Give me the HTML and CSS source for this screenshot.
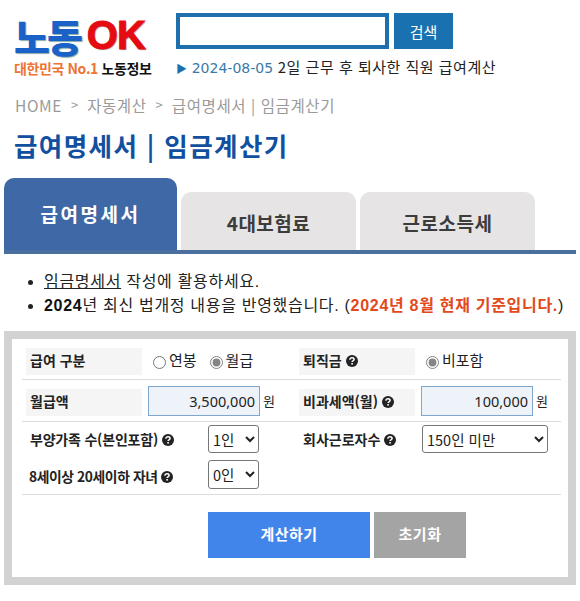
FILE: index.html
```html
<!DOCTYPE html>
<html lang="ko">
<head>
<meta charset="utf-8">
<title>급여명세서 | 임금계산기</title>
<link rel="stylesheet" href="styles.css">
</head>
<body>
<svg class="defs" width="0" height="0" aria-hidden="true">
  <symbol id="q" viewBox="0 0 12 12">
    <circle cx="6" cy="6" r="6" fill="#222"/>
    <path d="M3.9 4.7C3.9 3.5 4.8 2.8 6 2.8C7.2 2.8 8.1 3.5 8.1 4.5C8.1 5.9 6.1 5.9 6.1 7.1" fill="none" stroke="#fff" stroke-width="1.5"/>
    <rect x="5.3" y="8" width="1.6" height="1.6" fill="#fff"/>
  </symbol>
</svg>
<div class="page">
  <header class="top">
    <div class="logo">
      <div class="logo-main"><span class="logo-ko">노동</span><span class="logo-ok">OK</span></div>
      <div class="logo-sub"><span class="logo-orange">대한민국 No.1</span> 노동정보</div>
    </div>
    <div class="search-area">
      <form class="search">
        <input class="search-input" type="text" aria-label="검색어">
        <button class="search-btn" type="button">검색</button>
      </form>
      <p class="ticker"><span class="tri">▶</span> <span class="date">2024-08-05</span> 2일 근무 후 퇴사한 직원 급여계산</p>
    </div>
  </header>

  <nav class="crumbs"><span>HOME</span><i>&gt;</i><span>자동계산</span><i>&gt;</i><span>급여명세서 | 임금계산기</span></nav>
  <h1 class="title">급여명세서 | 임금계산기</h1>

  <div class="tabs">
    <a class="tab tab-on">급여명세서</a>
    <a class="tab">4대보험료</a>
    <a class="tab">근로소득세</a>
  </div>

  <ul class="notes">
    <li><u>임금명세서</u> 작성에 활용하세요.</li>
    <li><b>2024</b>년 최신 법개정 내용을 반영했습니다. (<b class="red">2024년 8월 현재 기준입니다.</b>)</li>
  </ul>

  <section class="panel">
    <div class="sheet">
      <div class="row row-a">
        <div class="cell">
          <div class="label">급여 구분</div>
          <label class="radio"><input type="radio" name="pay">연봉</label>
          <label class="radio"><input type="radio" name="pay" checked>월급</label>
        </div>
        <div class="cell">
          <div class="label">퇴직금 <svg class="q"><use href="#q"/></svg></div>
          <label class="radio"><input type="radio" name="ret" checked>비포함</label>
        </div>
      </div>
      <div class="row row-b">
        <div class="cell">
          <div class="label">월급액</div>
          <input class="money" type="text" value="3,500,000" aria-label="월급액"><span class="won">원</span>
        </div>
        <div class="cell">
          <div class="label">비과세액(월) <svg class="q"><use href="#q"/></svg></div>
          <input class="money" type="text" value="100,000" aria-label="비과세액"><span class="won">원</span>
        </div>
      </div>
      <div class="row row-c">
        <div class="cell">
          <div class="plain">부양가족 수(본인포함) <svg class="q"><use href="#q"/></svg></div>
          <select class="sel sel-s" aria-label="부양가족 수"><option>1인</option></select>
        </div>
        <div class="cell">
          <div class="plain plain-r">회사근로자수 <svg class="q"><use href="#q"/></svg></div>
          <select class="sel sel-l" aria-label="회사근로자수"><option>150인 미만</option></select>
        </div>
        <div class="cell cell-2">
          <div class="plain plain-sm">8세이상 20세이하 자녀 <svg class="q"><use href="#q"/></svg></div>
          <select class="sel sel-s sel-low" aria-label="자녀 수"><option>0인</option></select>
        </div>
      </div>
      <div class="actions">
        <button class="btn btn-calc" type="button">계산하기</button>
        <button class="btn btn-reset" type="button">초기화</button>
      </div>
    </div>
  </section>
</div>
</body>
</html>
```
FILE: styles.css
```css
* { box-sizing: border-box; }
html, body { margin: 0; padding: 0; background: #fff; }
body { font-family: "Liberation Sans", "Noto Sans CJK KR", sans-serif; color: #222; overflow: hidden; }
.defs { display: block; height: 0; }
.page { width: 576px; padding-left: 4px; }

.top { display: flex; height: 92px; padding-top: 13px; }
.logo { width: 172px; padding: 0 0 0 10px; }
.logo-main { display: flex; align-items: center; height: 45px; }
.logo-ko { font: 900 39px/45px "Noto Sans CJK KR", sans-serif; color: #1a62c8; letter-spacing: -3px; text-shadow: 1px 1px 1px #8aa; }
.logo-ok { font: 900 40px/45px "Liberation Sans", sans-serif; color: #e60b12; margin-left: 7px; letter-spacing: -1px; -webkit-text-stroke: 1px #e60b12; text-shadow: 1px 1px 1px #999; }
.logo-sub { font: 700 14px/20px "Noto Sans CJK KR", sans-serif; color: #111; letter-spacing: -.4px; white-space: nowrap; }
.logo-orange { color: #ee7433; }
.search-area { flex: 1; }
.search { display: flex; gap: 5px; height: 36px; }
.search-input { width: 213px; height: 36px; border: 4px solid #1e70ad; background: #fff; border-radius: 0; padding: 0; }
.search-btn { width: 59px; height: 36px; border: 0; background: #1a71b0; color: #fff; font: 400 15px "Noto Sans CJK KR", sans-serif; padding: 0; }
.ticker { margin: 8px 0 0; font: 400 15px/20px "Noto Sans CJK KR", sans-serif; color: #222; white-space: nowrap; letter-spacing: .5px; }
.tri { color: #1e70ad; font-size: 11px; letter-spacing: 0; }
.date { font-family: "DejaVu Sans", sans-serif; font-size: 14px; letter-spacing: 0; color: #3a7aa8; }

.crumbs { display: flex; align-items: center; height: 26px; padding-left: 11px; font: 400 15.5px/26px "Noto Sans CJK KR", sans-serif; color: #9a9a9a; letter-spacing: .6px; }
.crumbs i { font-style: normal; margin: 0 9px; font-size: 13px; letter-spacing: 0; }
.title { margin: 9px 0 0; padding-left: 10px; height: 36px; font: 700 25.5px/36px "Noto Sans CJK KR", sans-serif; color: #12509f; white-space: nowrap; letter-spacing: 1.4px; }

.tabs { display: flex; align-items: flex-end; gap: 4px; height: 76px; margin-top: 15px; border-bottom: 4px solid #4a6f9f; }
.tab { display: flex; align-items: center; justify-content: center; width: 175px; height: 58px; padding-top: 2px; background: #e6e4e5; border-radius: 10px 10px 0 0; color: #3c3c3c; font: 700 19px "Noto Sans CJK KR", sans-serif; letter-spacing: .5px; }
.tab-on { width: 173px; height: 72px; padding: 0 0 2px; background: #3f69a6; color: #fff; letter-spacing: 2.5px; }

.notes { margin: 16px 0 0; padding: 0 0 0 40px; height: 61px; font: 400 16px/24px "Liberation Sans", "Noto Sans CJK KR", sans-serif; color: #222; white-space: nowrap; letter-spacing: .7px; }
.notes b { color: #111; }
.notes .red { color: #e2491c; }

.panel { border: 8px solid #d2d2d2; height: 254px; }
.sheet { padding: 9px 7px 0 10px; height: 238px; }
.row { display: grid; grid-template-columns: 273px 266px; border-bottom: 1px solid #dcdcdc; }
.cell { display: flex; align-items: flex-start; padding-left: 4px; font: 400 15px/20px "Noto Sans CJK KR", sans-serif; color: #222; }
.row-a { height: 32px; }
.row-a .cell { height: 27px; }
.row-b { height: 42px; }
.row-b .cell { padding-top: 6px; height: 41px; }
.row-b .label { margin-top: 3px; }
.row-c { height: 73px; grid-template-rows: 38px 34px; }
.row-c .cell { padding-top: 3px; }
.row-c .cell-2 { grid-column: 1; padding-top: 0; }
.label { width: 116px; height: 27px; padding-left: 4px; background: #f5f5f5; font: 700 14px/25px "Noto Sans CJK KR", sans-serif; color: #222; flex: none; white-space: nowrap; }
.q { width: 12px; height: 12px; vertical-align: -1px; }
.radio { display: flex; align-items: center; margin-left: 11px; height: 24px; }
.radio input { margin: 4px 3px 0 0; width: 13px; height: 13px; accent-color: #858585; }
.radio + .radio { margin-left: 13px; }
.money { width: 112px; height: 30px; margin-left: 6px; padding: 0 4px; text-align: right; background: #eef3f9; border: 1px solid #7ea6cf; border-radius: 0; font: 400 14.5px "Noto Sans", sans-serif; color: #222; }
.won { margin-left: 3px; font-size: 13px; line-height: 30px; }
.plain { width: 182px; padding-left: 4px; font: 700 14px/28px "Noto Sans CJK KR", sans-serif; color: #222; white-space: nowrap; flex: none; letter-spacing: -.2px; }
.plain-r { width: 123px; letter-spacing: 0; }
.plain-sm { line-height: 32px; letter-spacing: -.4px; font-size: 13.8px; padding-left: 3px; margin-right: 1px; width: 181px; }
.sel { height: 28px; background: #fff; border: 1px solid #767676; border-radius: 3px; font: 400 14.5px "Noto Sans CJK KR", sans-serif; color: #222; padding: 0; }
.sel-s { width: 51px; }
.sel-l { width: 126px; }
.sel-low { height: 29px; }
.actions { display: flex; gap: 4px; padding: 17px 0 0 186px; }
.btn { height: 46px; border: 0; color: #fff; font: 700 15px "Noto Sans CJK KR", sans-serif; letter-spacing: .5px; padding: 0 0 4px; }
.btn-calc { width: 162px; background: #4285ea; }
.btn-reset { width: 92px; background: #a4a4a4; }
```
